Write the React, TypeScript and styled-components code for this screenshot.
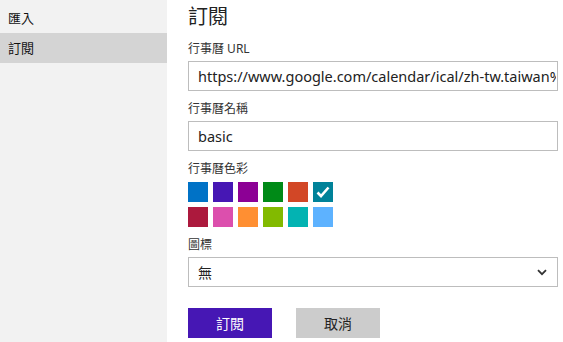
import styled, { createGlobalStyle } from 'styled-components';

const GlobalStyle = createGlobalStyle`
  html, body {
    margin:0;
    padding:0;
    background:#fff;
  }
  body{
    font-family:"Noto Sans", "Noto Sans CJK TC", sans-serif;
    color:#222;
  }
`

const Page = styled.div`
  display:flex;
  width:563px;
  height:342px;
  overflow:hidden;
`

const Sidebar = styled.ul`
  width:167px;
  flex-shrink:0;
  background-color:#f2f2f2;
  margin:0;
  padding:3px 0 0;
  list-style:none;
`

const SideItem = styled.li<{ $active?: boolean }>`
  height:30px;
  line-height:30px;
  padding-left:8px;
  font-size:13px;
  color:#111;
  background-color:${p => (p.$active ? '#d4d4d4' : 'transparent')};
`

const Main = styled.div`
  flex:1;
  padding:2px 5px 0 21px;
  display:flex;
  flex-direction:column;
`

const Title = styled.h1`
  margin:0;
  font-size:20px;
  font-weight:400;
  line-height:29px;
  color:#222;
`

const Label = styled.div`
  font-size:12px;
  line-height:16px;
  color:#333;
  margin-top:10px;
  margin-bottom:4px;
`

const Field = styled.input`
  box-sizing:border-box;
  width:370px;
  height:30px;
  border:1px solid #bdbdbd;
  padding:0 1px 0 9px;
  font-family:"Noto Sans", "Noto Sans CJK TC", sans-serif;
  font-size:14.5px;
  color:#222;
  outline:none;
  background:#fff;
`

const Swatches = styled.div`
  display:grid;
  grid-template-columns:repeat(6, 20px);
  grid-auto-rows:20px;
  gap:5px;
  margin-top:1px;
`

const Swatch = styled.div<{ $color: string }>`
  background-color:${p => p.$color};
  display:flex;
  align-items:center;
  justify-content:center;
`

const Select = styled.div`
  box-sizing:border-box;
  width:370px;
  height:30px;
  border:1px solid #bdbdbd;
  padding:0 10px 0 9px;
  display:flex;
  align-items:center;
  justify-content:space-between;
  font-size:14px;
  color:#222;
`

const Buttons = styled.div`
  display:flex;
  gap:24px;
  margin-top:21px;
`

const Button = styled.button<{ $primary?: boolean }>`
  width:84px;
  height:30px;
  border:none;
  font-family:"Noto Sans", "Noto Sans CJK TC", sans-serif;
  font-size:14px;
  color:${p => (p.$primary ? '#fff' : '#222')};
  background-color:${p => (p.$primary ? '#4617b4' : '#cccccc')};
`

const colors = [
  '#0072c6', '#4617b4', '#8c0095', '#008a17', '#d24726', '#008299',
  '#ac193d', '#dc4fad', '#ff8f32', '#82ba00', '#03b3b2', '#5db2ff',
]

export default function App() {
  return (
    <Page>
      <GlobalStyle />
      <Sidebar>
        <SideItem>匯入</SideItem>
        <SideItem $active>訂閱</SideItem>
      </Sidebar>
      <Main>
        <Title>訂閱</Title>
        <Label>行事曆 URL</Label>
        <Field readOnly value="https://www.google.com/calendar/ical/zh-tw.taiwan%23holiday%40group.v.calendar.google.com/public/basic.ics" />
        <Label>行事曆名稱</Label>
        <Field readOnly value="basic" />
        <Label>行事曆色彩</Label>
        <Swatches>
          {colors.map((c, i) => (
            <Swatch key={c} $color={c}>
              {i === 5 && (
                <svg width="14" height="12" viewBox="0 0 14 12">
                  <path d="M1.5 6.5 L5 10 L12.5 1.5" stroke="#fff" strokeWidth="2.6" fill="none" />
                </svg>
              )}
            </Swatch>
          ))}
        </Swatches>
        <Label>圖標</Label>
        <Select>
          <span>無</span>
          <svg width="10" height="7" viewBox="0 0 10 7">
            <path d="M1 1.2 L5 5.2 L9 1.2" stroke="#333" strokeWidth="1.8" fill="none" />
          </svg>
        </Select>
        <Buttons>
          <Button $primary>訂閱</Button>
          <Button>取消</Button>
        </Buttons>
      </Main>
    </Page>
  );
}
